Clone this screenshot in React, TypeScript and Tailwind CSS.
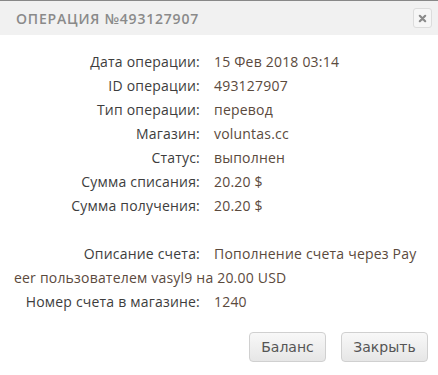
const rows = [
  ["Дата операции:", "15 Фев 2018 03:14"],
  ["ID операции:", "493127907"],
  ["Тип операции:", "перевод"],
  ["Магазин:", "voluntas.cc"],
  ["Статус:", "выполнен"],
  ["Сумма списания:", "20.20 $"],
  ["Сумма получения:", "20.20 $"],
];

export default function App() {
  return (
    <div className="w-[438px] h-[375px] bg-white border-t border-[#888] font-['Open_Sans',sans-serif] overflow-hidden">
      <div className="h-[34px] bg-[#f1f1f1] flex items-center justify-between pl-4 pr-[6px]">
        <div className="text-[14px] font-semibold tracking-[0.8px] text-[#8a8a8a]">
          ОПЕРАЦИЯ №493127907
        </div>
        <button className="w-[19px] h-[20px] rounded-[3px] border border-[#dcdcdc] bg-[#f6f6f6] flex items-center justify-center">
          <svg width="9" height="9" viewBox="0 0 10 10">
            <path d="M2 2 L8 8 M8 2 L2 8" stroke="#8a8a8a" strokeWidth="2.4" strokeLinecap="round" />
          </svg>
        </button>
      </div>

      <div className="pt-[15px] px-[14px] text-[14px] tracking-[0.2px] leading-[24px]">
        {rows.map(([label, value]) => (
          <div key={label} className="flex">
            <div className="w-[186px] text-right text-[#3d3d3d]">{label}</div>
            <div className="pl-[14px] text-[#5b4a3d]">{value}</div>
          </div>
        ))}

        <div className="mt-[24px] flex">
          <div className="w-[186px] text-right text-[#3d3d3d]">Описание счета:</div>
          <div className="pl-[14px] text-[#5b4a3d] whitespace-nowrap">Пополнение счета через Pay</div>
        </div>
        <div className="text-[#5b4a3d]">eer пользователем vasyl9 на 20.00 USD</div>
        <div className="flex">
          <div className="w-[186px] text-right text-[#3d3d3d]">Номер счета в магазине:</div>
          <div className="pl-[14px] text-[#5b4a3d]">1240</div>
        </div>
      </div>

      <div className="flex justify-end gap-[15px] pr-[10px] pt-[18px] font-['DejaVu_Sans',sans-serif] text-[14px] text-[#555]">
        <button className="w-[77px] h-[30px] rounded-[4px] border border-[#d0d0d0] bg-gradient-to-b from-[#f8f8f8] to-[#e6e6e6]">
          Баланс
        </button>
        <button className="w-[87px] h-[30px] rounded-[4px] border border-[#d0d0d0] bg-gradient-to-b from-[#f8f8f8] to-[#e6e6e6]">
          Закрыть
        </button>
      </div>
    </div>
  );
}
